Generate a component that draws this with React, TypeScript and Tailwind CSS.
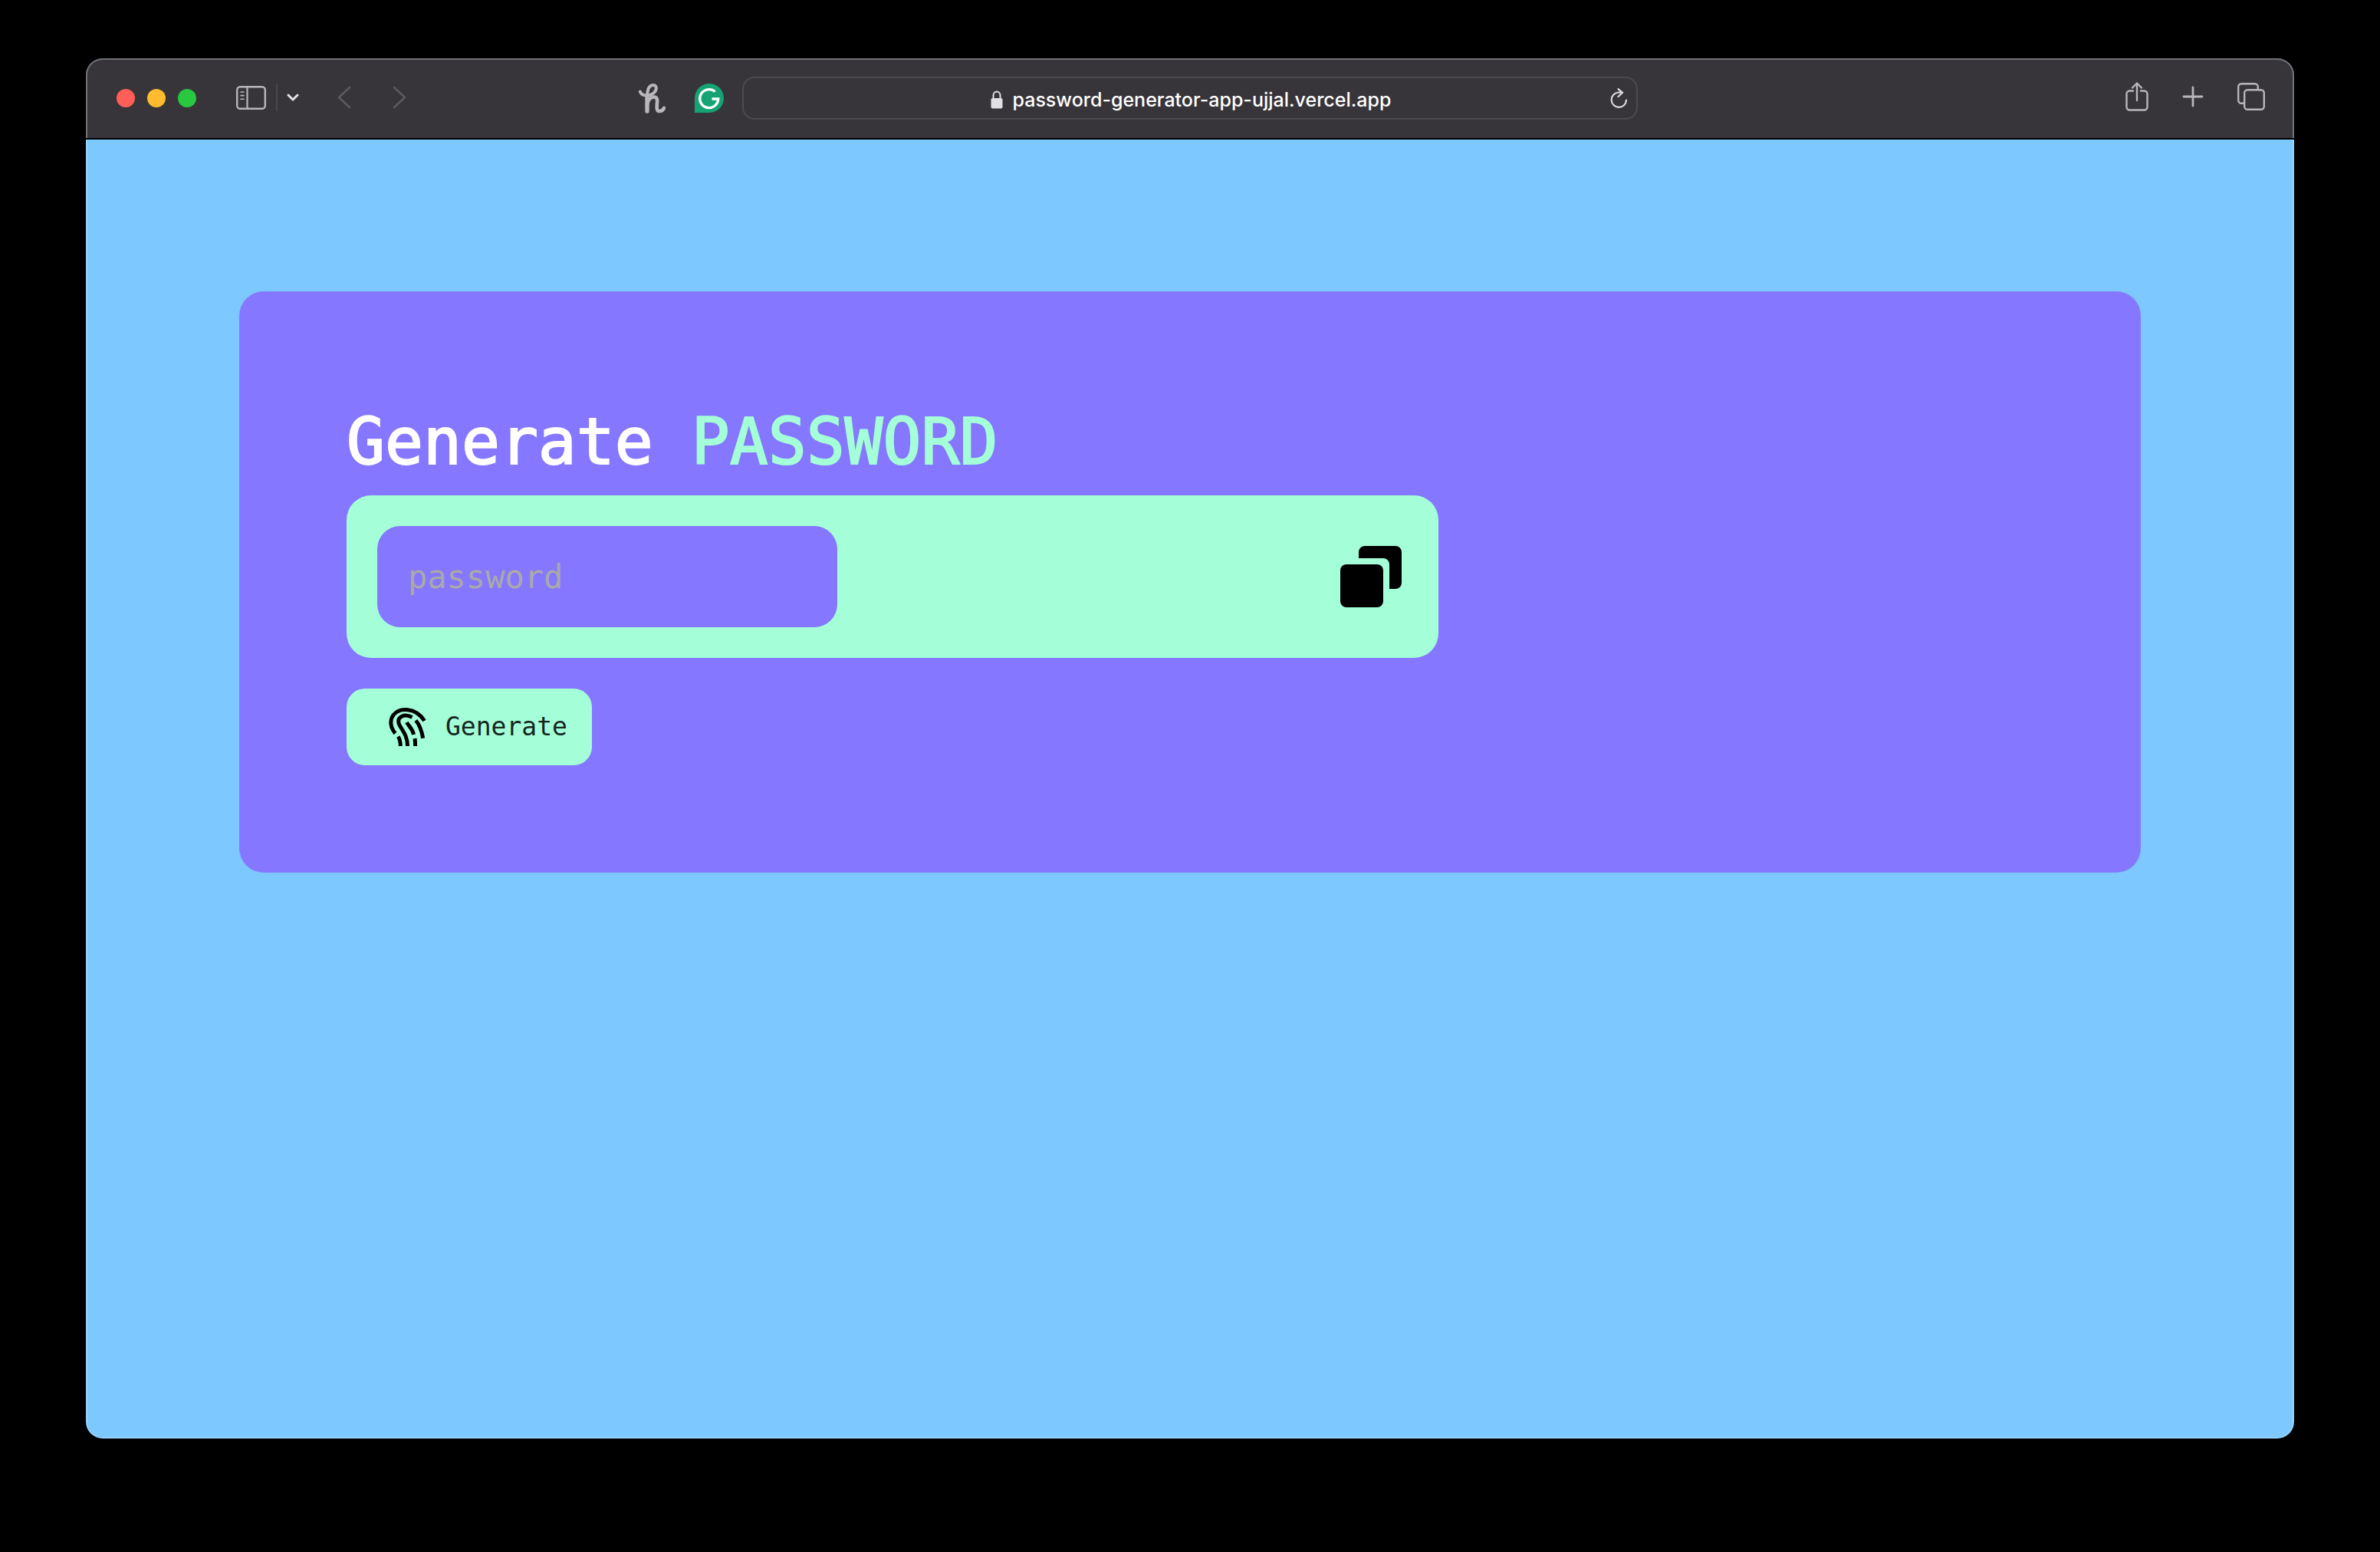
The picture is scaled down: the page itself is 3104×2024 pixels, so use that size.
import React from "react";

function SidebarIcon() {
  return (
    <svg viewBox="0 0 39 31" className="h-[31px] w-[39px]" fill="none" stroke="#b8b6bb" strokeLinecap="round">
      <rect x="1.2" y="1.2" width="36.6" height="28.6" rx="4" strokeWidth="2.4" />
      <path d="M14.5 1v29" strokeWidth="2.2" />
      <path d="M6 8h4M6 12.6h4M6 17.2h4" strokeWidth="1.6" />
    </svg>
  );
}

function HoneyIcon() {
  return (
    <svg viewBox="0 0 35 39" className="h-[39px] w-[35px]" fill="none" stroke="#b8b6bb" strokeLinecap="round" strokeLinejoin="round">
      <path d="M1.800 10.500C4 16 12 17 18 13.500C24 9.500 24.500 2 19 2C13 2 11 8 11 18V36" strokeWidth="4" />
      <path d="M11 28C12 21 16 17.500 20 17.500C24 17.500 24.500 21 24 25.500C23.300 32 23.500 36 27 36C30 36 32 34.500 33 31.800" strokeWidth="4.600" />
      <path d="M11 17V36" strokeWidth="5.400" />
    </svg>
  );
}

function GrammarlyIcon() {
  return (
    <svg viewBox="0 0 38 38" className="size-[38px]" fill="none">
      <path d="M19 0a19 19 0 1 1 0 38H0V19A19 19 0 0 1 19 0z" fill="#15a374" />
      <path d="M26.500 10.500A12 12 0 1 0 30.700 20H22.500" stroke="#fff" strokeWidth="3.400" />
    </svg>
  );
}

function FingerprintIcon() {
  return (
    <svg viewBox="0 0 48 50" className="h-[50px] w-12 overflow-visible" fill="none" stroke="#000" strokeWidth="5">
      <path d="M8.500 33.500C2 26 1 16 6 9.500C14 -0.500 35 -1 46.500 17" />
      <path d="M30.500 12.500C20 7 11 12 13 20C15 27 24.500 34 24.500 50" />
      <path d="M23.500 19C26 24 31 27 32.500 35" />
      <path d="M35.300 16.500C40 22 43 30 44.700 39.700" />
      <path d="M12.300 37.500C14.500 41 15.300 45 15.300 50M34 40C34.500 43 34.600 46 34.600 50" />
    </svg>
  );
}

function Toolbar() {
  return (
    <header className="grid h-[106px] grid-cols-[1fr_1168px_1fr] items-center border-b-2 border-black bg-[#38353a] text-[#b8b6bb]">
      <div className="flex items-center justify-between pr-6 pl-10">
        <div className="flex items-center">
          <div className="flex gap-4">
            <button aria-label="Close" className="size-6 rounded-full bg-[#ff5f57]" />
            <button aria-label="Minimize" className="size-6 rounded-full bg-[#febc2e]" />
            <button aria-label="Zoom" className="size-6 rounded-full bg-[#28c840]" />
          </div>
          <div className="flex items-center pb-0.5">
            <button aria-label="Show sidebar" className="ml-[52px]">
              <SidebarIcon />
            </button>
            <div className="ml-[13px] h-9 w-0.5 bg-[#4a474c]" />
            <button aria-label="Tab groups" className="ml-3">
              <svg viewBox="0 0 16 10" className="h-[10px] w-4" fill="none" stroke="#e4e2e6" strokeWidth="3" strokeLinecap="round" strokeLinejoin="round">
                <path d="M2 2l6 6 6-6" />
              </svg>
            </button>
            <button aria-label="Back" className="ml-[50px]">
              <svg viewBox="0 0 18 30" className="h-[30px] w-[18px]" fill="none" stroke="#5c595e" strokeWidth="2.6" strokeLinecap="round" strokeLinejoin="round">
                <path d="M16 2L2 15l14 13" />
              </svg>
            </button>
            <button aria-label="Forward" className="ml-[54px]">
              <svg viewBox="0 0 18 30" className="h-[30px] w-[18px]" fill="none" stroke="#5c595e" strokeWidth="2.6" strokeLinecap="round" strokeLinejoin="round">
                <path d="M2 2l14 13L2 28" />
              </svg>
            </button>
          </div>
        </div>
        <div className="flex items-center gap-[38px]">
          <button aria-label="Honey"><HoneyIcon /></button>
          <button aria-label="Grammarly"><GrammarlyIcon /></button>
        </div>
      </div>
      <div className="flex h-14 items-center rounded-2xl border-2 border-[#4d4a50] pr-3">
        <div className="flex flex-1 items-center justify-center gap-[13px] pt-1 pl-9">
          <svg viewBox="0 0 16 24" className="h-6 w-4">
            <path d="M3.500 11V6.500a4.500 5 0 0 1 9 0V11" fill="none" stroke="#e0dfe1" strokeWidth="2" />
            <rect x="0.500" y="10" width="15" height="13.500" rx="2" fill="#e0dfe1" />
          </svg>
          <a href="#" className="font-['Inter',sans-serif] text-[25px] leading-8 font-medium text-white">
            password-generator-app-ujjal.vercel.app
          </a>
        </div>
        <button aria-label="Reload">
          <svg viewBox="0 0 22 26" className="h-[26px] w-[22px]" fill="none" stroke="#dddbdf" strokeWidth="2.200" strokeLinecap="round">
            <path d="M21 15.500A9.700 9.700 0 1 1 11 5.500H16M10.500 1.200L16 5.800L10.500 11" />
          </svg>
        </button>
      </div>
      <div className="flex items-center justify-end gap-[44px] pr-[38px] pb-1">
        <button aria-label="Share">
          <svg viewBox="0 0 30 38" className="h-[38px] w-[30px]" fill="none" stroke="currentColor" strokeWidth="2.400" strokeLinecap="round" strokeLinejoin="round">
            <path d="M10 11.500H5.500a4 4 0 0 0-4 4V32.500a4 4 0 0 0 4 4H24.500a4 4 0 0 0 4-4V15.500a4 4 0 0 0-4-4H20M15 24V1.500M9 7.500L15 1.500L21 7.500" />
          </svg>
        </button>
        <button aria-label="New tab">
          <svg viewBox="0 0 28 28" className="size-7" fill="none" stroke="currentColor" strokeWidth="2.800" strokeLinecap="round">
            <path d="M14 2V26M2 14H26" />
          </svg>
        </button>
        <button aria-label="Show all tabs">
          <svg viewBox="0 0 36 36" className="size-9" fill="none" stroke="currentColor" strokeWidth="2.400" strokeLinejoin="round">
            <rect x="9.200" y="9.200" width="25.600" height="25.600" rx="4" />
            <path d="M9 26.800H5.200a4 4 0 0 1-4-4V5.200a4 4 0 0 1 4-4H22.800a4 4 0 0 1 4 4V9" />
          </svg>
        </button>
      </div>
    </header>
  );
}

export default function App() {
  return (
    <div className="flex min-h-screen flex-col bg-black px-28 pt-[76px] pb-[148px]">
      <div className="relative flex flex-1 flex-col overflow-hidden rounded-[22px] bg-[#7cc8ff]">
        <Toolbar />
        <main className="flex-1 px-[200px] pt-[198px] font-['DejaVu_Sans_Mono',monospace]">
          <section className="rounded-[32px] bg-[#8577ff] p-[140px]">
            <h1 className="text-[83px] leading-[114px] font-normal text-white [-webkit-text-stroke:2px]">
              Generate <span className="text-[#a4ffd8]">PASSWORD</span>
            </h1>
            <div className="mt-3 flex w-full max-w-[1424px] items-center justify-between rounded-[32px] bg-[#a4ffd8] p-10">
              <input
                type="text"
                aria-label="password"
                placeholder="password"
                className="h-[132px] w-[600px] rounded-[30px] bg-[#8577ff] px-10 text-[42px] text-white outline-none placeholder:text-[#a9a9a9]"
              />
              <button aria-label="Copy password">
                <svg viewBox="0 0 24 24" className="size-24" fill="#000">
                  <rect x="2" y="8" width="14" height="14" rx="2" />
                  <path d="M20 2H10a2 2 0 0 0-2 2v2h8a2 2 0 0 1 2 2v8h2a2 2 0 0 0 2-2V4a2 2 0 0 0-2-2z" />
                </svg>
              </button>
            </div>
            <button className="mt-10 flex h-[100px] w-80 items-center gap-[26px] rounded-3xl bg-[#a4ffd8] pl-[55px] text-[33px] text-[#14271f]">
              <FingerprintIcon />
              Generate
            </button>
          </section>
        </main>
        <div className="pointer-events-none absolute inset-x-0 top-0 h-[104px] rounded-t-[22px] border-x-2 border-t-2 border-[#737175]" />
        <div className="pointer-events-none absolute inset-x-0 top-[106px] bottom-0 rounded-b-[22px] border-x-2 border-b-2 border-white/20" />
      </div>
    </div>
  );
}
